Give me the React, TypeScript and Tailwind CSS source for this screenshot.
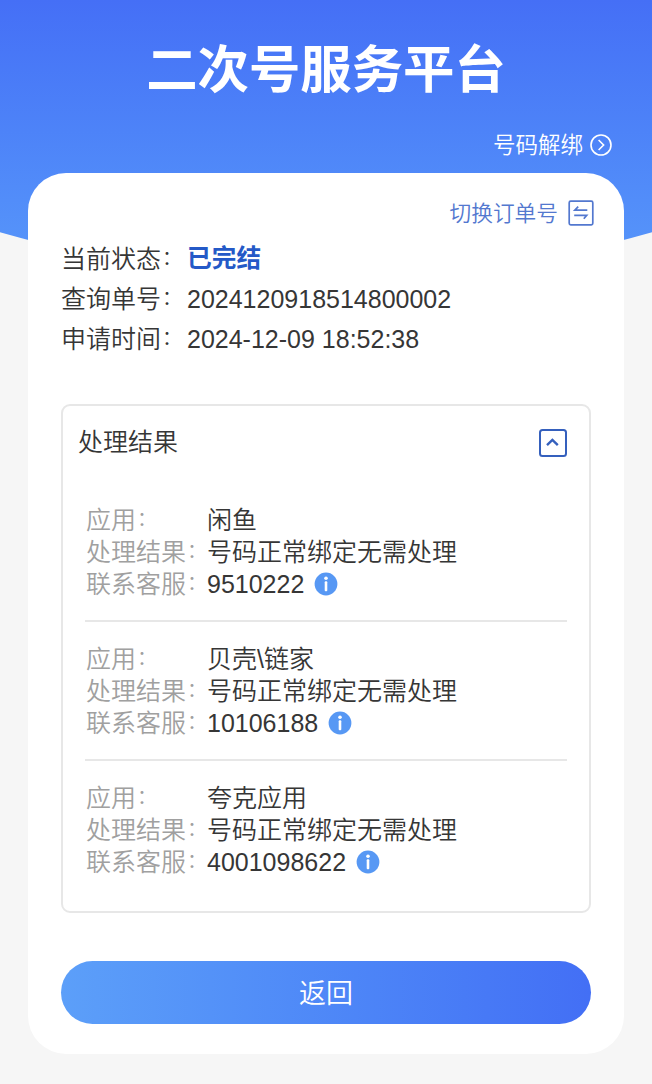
import React from "react";

type Result = { app: string; outcome: string; phone: string };

const results: Result[] = [
  { app: "闲鱼", outcome: "号码正常绑定无需处理", phone: "9510222" },
  { app: "贝壳\\链家", outcome: "号码正常绑定无需处理", phone: "10106188" },
  { app: "夸克应用", outcome: "号码正常绑定无需处理", phone: "4001098622" },
];

const summary = [
  { label: "查询单号", value: "2024120918514800002" },
  { label: "申请时间", value: "2024-12-09 18:52:38" },
];

function InfoIcon() {
  return (
    <svg className="-mt-px ml-2.5 size-6 shrink-0" viewBox="0 0 24 24">
      <circle cx="12" cy="12" r="11.4" fill="#5798f4" />
      <circle cx="12" cy="6.2" r="1.8" fill="#fff" />
      <rect x="10.7" y="9.2" width="2.6" height="10" rx="1" fill="#fff" />
    </svg>
  );
}

function Colon() {
  return <span className="relative -top-[3px] ml-px text-[20px] leading-none">：</span>;
}

function Row({ label, children }: { label: string; children: React.ReactNode }) {
  return (
    <div className="flex h-8 items-center whitespace-nowrap">
      <span className="w-[121px] shrink-0 font-[350] text-[#a0a0a0]">
        {label}
        <Colon />
      </span>
      {children}
    </div>
  );
}

export default function App() {
  return (
    <div className="relative flex h-[1084px] w-[652px] flex-col overflow-hidden bg-[#f6f6f6] font-['Liberation_Sans','Noto_Sans_CJK_SC',sans-serif] text-[25px] leading-8 text-[#363636]">
      <div className="absolute inset-x-0 top-0 h-[278px] bg-linear-to-b from-[#456ff6] to-[#5898fa] [clip-path:circle(1185px_at_50%_-907px)]" />

      <header className="relative flex h-[173px] flex-col">
        <h1 className="mt-[38px] text-center text-[51.4px] leading-[64px] font-bold text-white">二次号服务平台</h1>
        <a className="mt-[28px] mr-10 flex items-center justify-end gap-[7px] text-[22.5px] font-[350] text-white">
          号码解绑
          <svg className="-mt-0.5 size-[22px]" viewBox="0 0 22 22" fill="none" stroke="currentColor" strokeWidth="1.6">
            <circle cx="11" cy="11" r="10" />
            <path d="M8.6 6l5 5-5 5" />
          </svg>
        </a>
      </header>

      <main className="relative mx-7 flex h-[881px] flex-col rounded-[38px] bg-white px-[33px]">
        <a className="mt-[25px] mr-[-3px] flex h-8 items-center justify-end gap-[10px] text-[21.7px] font-[350] text-[#5378cf]">
          切换订单号
          <svg className="-mt-0.5 size-[26px]" viewBox="0 0 26 26" fill="none" stroke="#5378cf" strokeWidth="1.7">
            <rect x="1.2" y="1.2" width="23.6" height="23.6" rx="1.5" />
            <path d="M10.2 6.6L6.8 10.2H19.3M6.2 15.4H18.7L15.8 18.8" />
          </svg>
        </a>

        <section className="mt-[9px] font-[350] whitespace-nowrap">
          <div className="flex h-10 items-center">
            <span className="w-[126px] shrink-0">
              当前状态
              <Colon />
            </span>
            <span className="text-[24.7px] font-bold text-[#2459c7]">已完结</span>
          </div>
          {summary.map((s) => (
            <div key={s.label} className="flex h-10 items-center">
              <span className="w-[125px] shrink-0">
                {s.label}
                <Colon />
              </span>
              <span className="ml-px">{s.value}</span>
            </div>
          ))}
        </section>

        <section className="mt-[45px] h-[509px] rounded-[9px] border-2 border-[#e7e7e7] font-[350]">
          <div className="flex h-[74px] items-center justify-between pr-[21px] pl-[15px]">
            <h2 className="-mt-0.5 font-[350]">处理结果</h2>
            <svg className="size-[30px]" viewBox="0 0 30 30" fill="none" stroke="#3560bd">
              <rect x="2" y="2" width="26" height="26" rx="2.5" strokeWidth="2" />
              <path d="M9 17.2l5.4-5.2 5.4 5.2" strokeWidth="2.4" />
            </svg>
          </div>
          <div className="mx-[22px] mt-[24px]">
            {results.map((r, i) => (
              <div key={r.phone} className={i < 2 ? "mb-[21px] border-b-2 border-[#e7e7e7] pb-5" : ""}>
                <div className="pl-px">
                  <Row label="应用">{r.app}</Row>
                  <Row label="处理结果">{r.outcome}</Row>
                  <Row label="联系客服">
                    {r.phone}
                    <InfoIcon />
                  </Row>
                </div>
              </div>
            ))}
          </div>
        </section>

        <button className="mt-12 h-[63px] rounded-full bg-linear-to-r from-[#5c9ff9] to-[#436ff5] pt-[3px] text-[27px] font-[350] text-white">
          返回
        </button>
      </main>
    </div>
  );
}
